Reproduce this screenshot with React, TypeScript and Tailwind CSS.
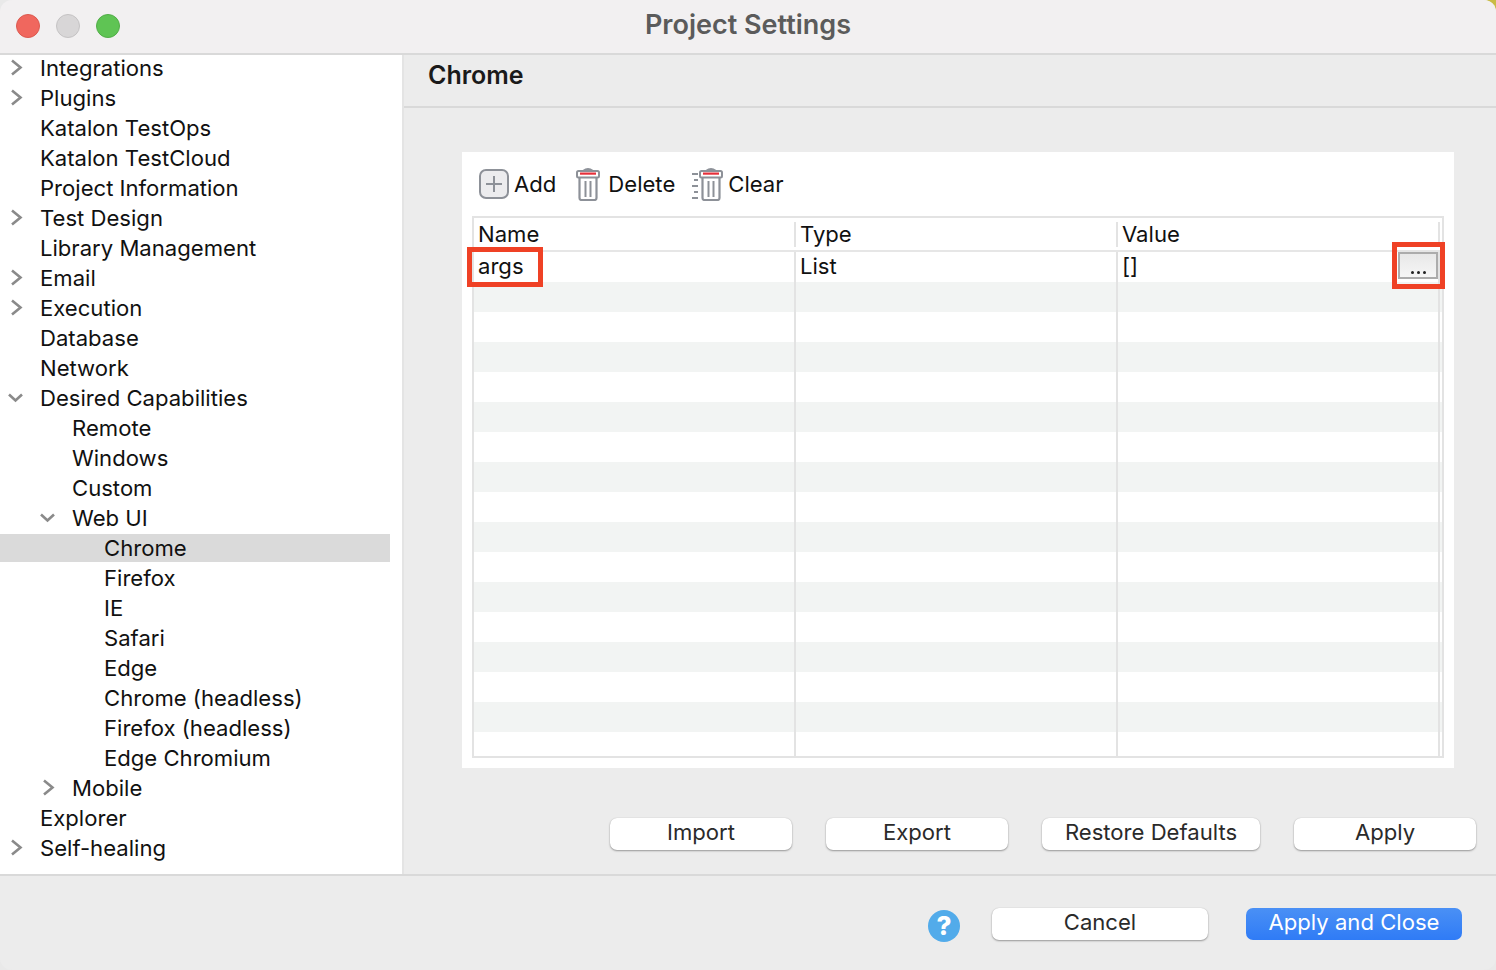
const TREE: { label: string; level: number; arrow?: "right" | "down"; selected?: boolean }[] = [
  { label: "Integrations", level: 0, arrow: "right" },
  { label: "Plugins", level: 0, arrow: "right" },
  { label: "Katalon TestOps", level: 0 },
  { label: "Katalon TestCloud", level: 0 },
  { label: "Project Information", level: 0 },
  { label: "Test Design", level: 0, arrow: "right" },
  { label: "Library Management", level: 0 },
  { label: "Email", level: 0, arrow: "right" },
  { label: "Execution", level: 0, arrow: "right" },
  { label: "Database", level: 0 },
  { label: "Network", level: 0 },
  { label: "Desired Capabilities", level: 0, arrow: "down" },
  { label: "Remote", level: 1 },
  { label: "Windows", level: 1 },
  { label: "Custom", level: 1 },
  { label: "Web UI", level: 1, arrow: "down" },
  { label: "Chrome", level: 2, selected: true },
  { label: "Firefox", level: 2 },
  { label: "IE", level: 2 },
  { label: "Safari", level: 2 },
  { label: "Edge", level: 2 },
  { label: "Chrome (headless)", level: 2 },
  { label: "Firefox (headless)", level: 2 },
  { label: "Edge Chromium", level: 2 },
  { label: "Mobile", level: 1, arrow: "right" },
  { label: "Explorer", level: 0 },
  { label: "Self-healing", level: 0, arrow: "right" },
];

function Arrow({ dir }: { dir: "right" | "down" }) {
  return (
    <svg width="18" height="18" viewBox="0 0 18 18" fill="none" stroke="#8a8a8a" strokeWidth="2.6">
      {dir === "right" ? <path d="M4 1.5 L12.5 8.5 L4 15.5" /> : <path d="M1 5.5 L7.5 11.5 L14 5.5" />}
    </svg>
  );
}

function TreeRow({ label, level, arrow, selected }: (typeof TREE)[number]) {
  const pad = level === 0 ? "pl-2" : level === 1 ? "pl-10" : "pl-[72px]";
  return (
    <div className="h-[30px] flex items-center">
      <div className={`h-[28px] w-[390px] flex items-center ${pad} ${selected ? "bg-[#dadada]" : ""}`}>
        <div className="w-8 shrink-0 flex items-center">{arrow && <Arrow dir={arrow} />}</div>
        <span className="pt-[2px] text-[22.1px] text-[#111] whitespace-nowrap">{label}</span>
      </div>
    </div>
  );
}

function TrashIcon({ lines }: { lines?: boolean }) {
  return (
    <svg width={lines ? 32 : 24} height="33" viewBox={lines ? "0 0 32 33" : "0 0 24 33"} fill="none">
      <g transform={lines ? "translate(8 0)" : undefined}>
        <path d="M7.5 3 Q12 -0.5 16.5 3" stroke="#8d9198" strokeWidth="2.4" />
        <rect x="1" y="3" width="22" height="6.5" rx="1.5" fill="#fff" stroke="#8d9198" strokeWidth="2" />
        <rect x="4" y="4.5" width="16" height="2.2" fill="#e5303a" />
        <path d="M3.5 9.5 V30 Q3.5 32 5.5 32 H18.5 Q20.5 32 20.5 30 V9.5" stroke="#8d9198" strokeWidth="2.2" />
        <path d="M9.5 13 V29 M14.5 13 V29" stroke="#8d9198" strokeWidth="2" />
      </g>
      {lines && <path d="M1 6 H7 M3 12 H7 M1 18 H7 M3 24 H7 M1 30 H7" stroke="#8d9198" strokeWidth="2" />}
    </svg>
  );
}

function PushButton({ label, width }: { label: string; width: string }) {
  return (
    <button
      className={`h-8 pb-[3px] ${width} bg-white rounded-[7px] text-[22.1px] leading-none text-[#2a2a2a] shadow-[0_1px_2px_rgba(0,0,0,0.35),0_0_1px_rgba(0,0,0,0.2)]`}
    >
      {label}
    </button>
  );
}

function Cell({ width, children }: { width: string; children?: React.ReactNode }) {
  return (
    <div className={`${width} h-full shrink-0 border-r-2 border-[#e3e3e3] pl-[4px] flex items-center text-[22.1px] text-[#111]`}>
      {children}
    </div>
  );
}

export default function App() {
  const stripes = Array.from({ length: 16 }, (_, i) => i);

  return (
    <div className="w-[1496px] h-[970px] relative bg-[#e9e9e9]">
      {/* desktop showing through the top right corner */}
      <div className="absolute top-0 right-0 w-3 h-3 bg-[#c9bb45]" />
      <div className="relative w-full h-full overflow-hidden bg-[#ececec] rounded-[12px] font-['Inter','Liberation_Sans',sans-serif] flex flex-col">
        {/* Title bar */}
        <div className="h-[55px] shrink-0 bg-[#f2f0f1] border-b-2 border-[#d9d9d9] relative flex items-center pl-4">
          <div className="flex gap-4 -mt-[1px]">
            <div className="w-6 h-6 rounded-full bg-[#f0675e] border border-[#dc5a50]" />
            <div className="w-6 h-6 rounded-full bg-[#d8d6d7] border border-[#c5c3c4]" />
            <div className="w-6 h-6 rounded-full bg-[#5fc454] border border-[#52ad48]" />
          </div>
          <div className="absolute inset-0 pb-[2px] flex items-center justify-center text-[27px] font-semibold text-[#5b5b5b]">
            Project Settings
          </div>
        </div>

        <div className="flex h-[819px] shrink-0">
          {/* Sidebar */}
          <div className="w-[402px] shrink-0 bg-white overflow-hidden">
            <div className="-mt-[2px]">
              {TREE.map((row) => (
                <TreeRow key={row.label} {...row} />
              ))}
            </div>
          </div>

          {/* Main panel */}
          <div className="flex-1 border-l-2 border-[#e4e4e4] flex flex-col">
            <div className="h-[53px] shrink-0 border-b-2 border-[#d9d9d9] pl-6 pb-[10px] flex items-center text-[25px] font-semibold text-[#1a1a1a]">
              Chrome
            </div>

            {/* Card */}
            <div className="mt-[44px] ml-[58px] w-[992px] h-[616px] bg-white p-[10px] pt-[12px] flex flex-col">
              <div className="h-[40px] flex items-center pl-[7px] text-[22.1px] text-[#111] mt-[1px]">
                <svg width="30" height="30" viewBox="0 0 30 30" fill="none">
                  <rect x="1" y="1" width="28" height="28" rx="6" fill="#ececee" stroke="#8d9198" strokeWidth="2" />
                  <path d="M15 7 V23 M7 15 H23" stroke="#8d9198" strokeWidth="2" />
                </svg>
                <span className="ml-[5px] pt-[2px]">Add</span>
                <span className="ml-[20px]"><TrashIcon /></span>
                <span className="ml-[8px] pt-[2px]">Delete</span>
                <span className="ml-[16px]"><TrashIcon lines /></span>
                <span className="ml-[5px] pt-[2px]">Clear</span>
              </div>

              {/* Table */}
              <div className="mt-[13px] w-[972px] h-[542px] border-2 border-[#e3e3e3] relative flex flex-col">
                <div className="h-[34px] shrink-0 border-b-2 border-[#e6e6e6] flex pt-[4px] pb-[3px]">
                  <Cell width="w-[322px]">Name</Cell>
                  <Cell width="w-[322px]">Type</Cell>
                  <Cell width="w-[322px]">Value</Cell>
                </div>
                <div className="h-[30px] shrink-0 flex">
                  <Cell width="w-[322px]">args</Cell>
                  <Cell width="w-[322px]">List</Cell>
                  <Cell width="w-[322px]">[]</Cell>
                </div>
                <div className="flex-1 min-h-0 overflow-hidden">
                  {stripes.map((i) => (
                    <div key={i} className={`h-[30px] flex ${i % 2 === 0 ? "bg-[#f2f4f3]" : "bg-white"}`}>
                      <Cell width="w-[322px]" />
                      <Cell width="w-[322px]" />
                      <Cell width="w-[322px]" />
                    </div>
                  ))}
                </div>

                {/* Value editor button */}
                <div className="absolute left-[924px] top-[34px] w-[40px] h-[27px] border-2 border-[#acacac] bg-gradient-to-b from-[#e8e8e8] to-[#f6f6f6] flex items-end justify-center pb-[3px] gap-[3px]">
                  <span className="w-[3px] h-[3px] rounded-full bg-[#222]" />
                  <span className="w-[3px] h-[3px] rounded-full bg-[#222]" />
                  <span className="w-[3px] h-[3px] rounded-full bg-[#222]" />
                </div>

                {/* Red annotations */}
                <div className="absolute -left-[7px] top-[29px] w-[76px] h-[40px] border-[5px] border-[#ef4125]" />
                <div className="absolute left-[918px] top-[24px] w-[53px] h-[47px] border-[5px] border-[#ef4125]" />
              </div>
            </div>

            <div className="mt-[50px] ml-[206px] flex">
              <PushButton label="Import" width="w-[182px]" />
              <span className="ml-[34px]"><PushButton label="Export" width="w-[182px]" /></span>
              <span className="ml-[34px]"><PushButton label="Restore Defaults" width="w-[218px]" /></span>
              <span className="ml-[34px]"><PushButton label="Apply" width="w-[182px]" /></span>
            </div>
          </div>
        </div>

        {/* Footer */}
        <div className="flex-1 border-t-2 border-[#d9d9d9] flex items-start pt-[32px] pl-[928px]">
          <div className="mt-[2px] w-8 h-8 rounded-full bg-[#52abea] flex items-center justify-center text-white text-[26px] font-extrabold leading-none">
            ?
          </div>
          <span className="ml-8"><PushButton label="Cancel" width="w-[216px]" /></span>
          <button className="ml-[38px] w-[216px] h-8 pb-[3px] rounded-[7px] bg-gradient-to-b from-[#4a90f5] to-[#2f7bf6] text-white text-[22.1px] leading-none">
            Apply and Close
          </button>
        </div>
      </div>
    </div>
  );
}
